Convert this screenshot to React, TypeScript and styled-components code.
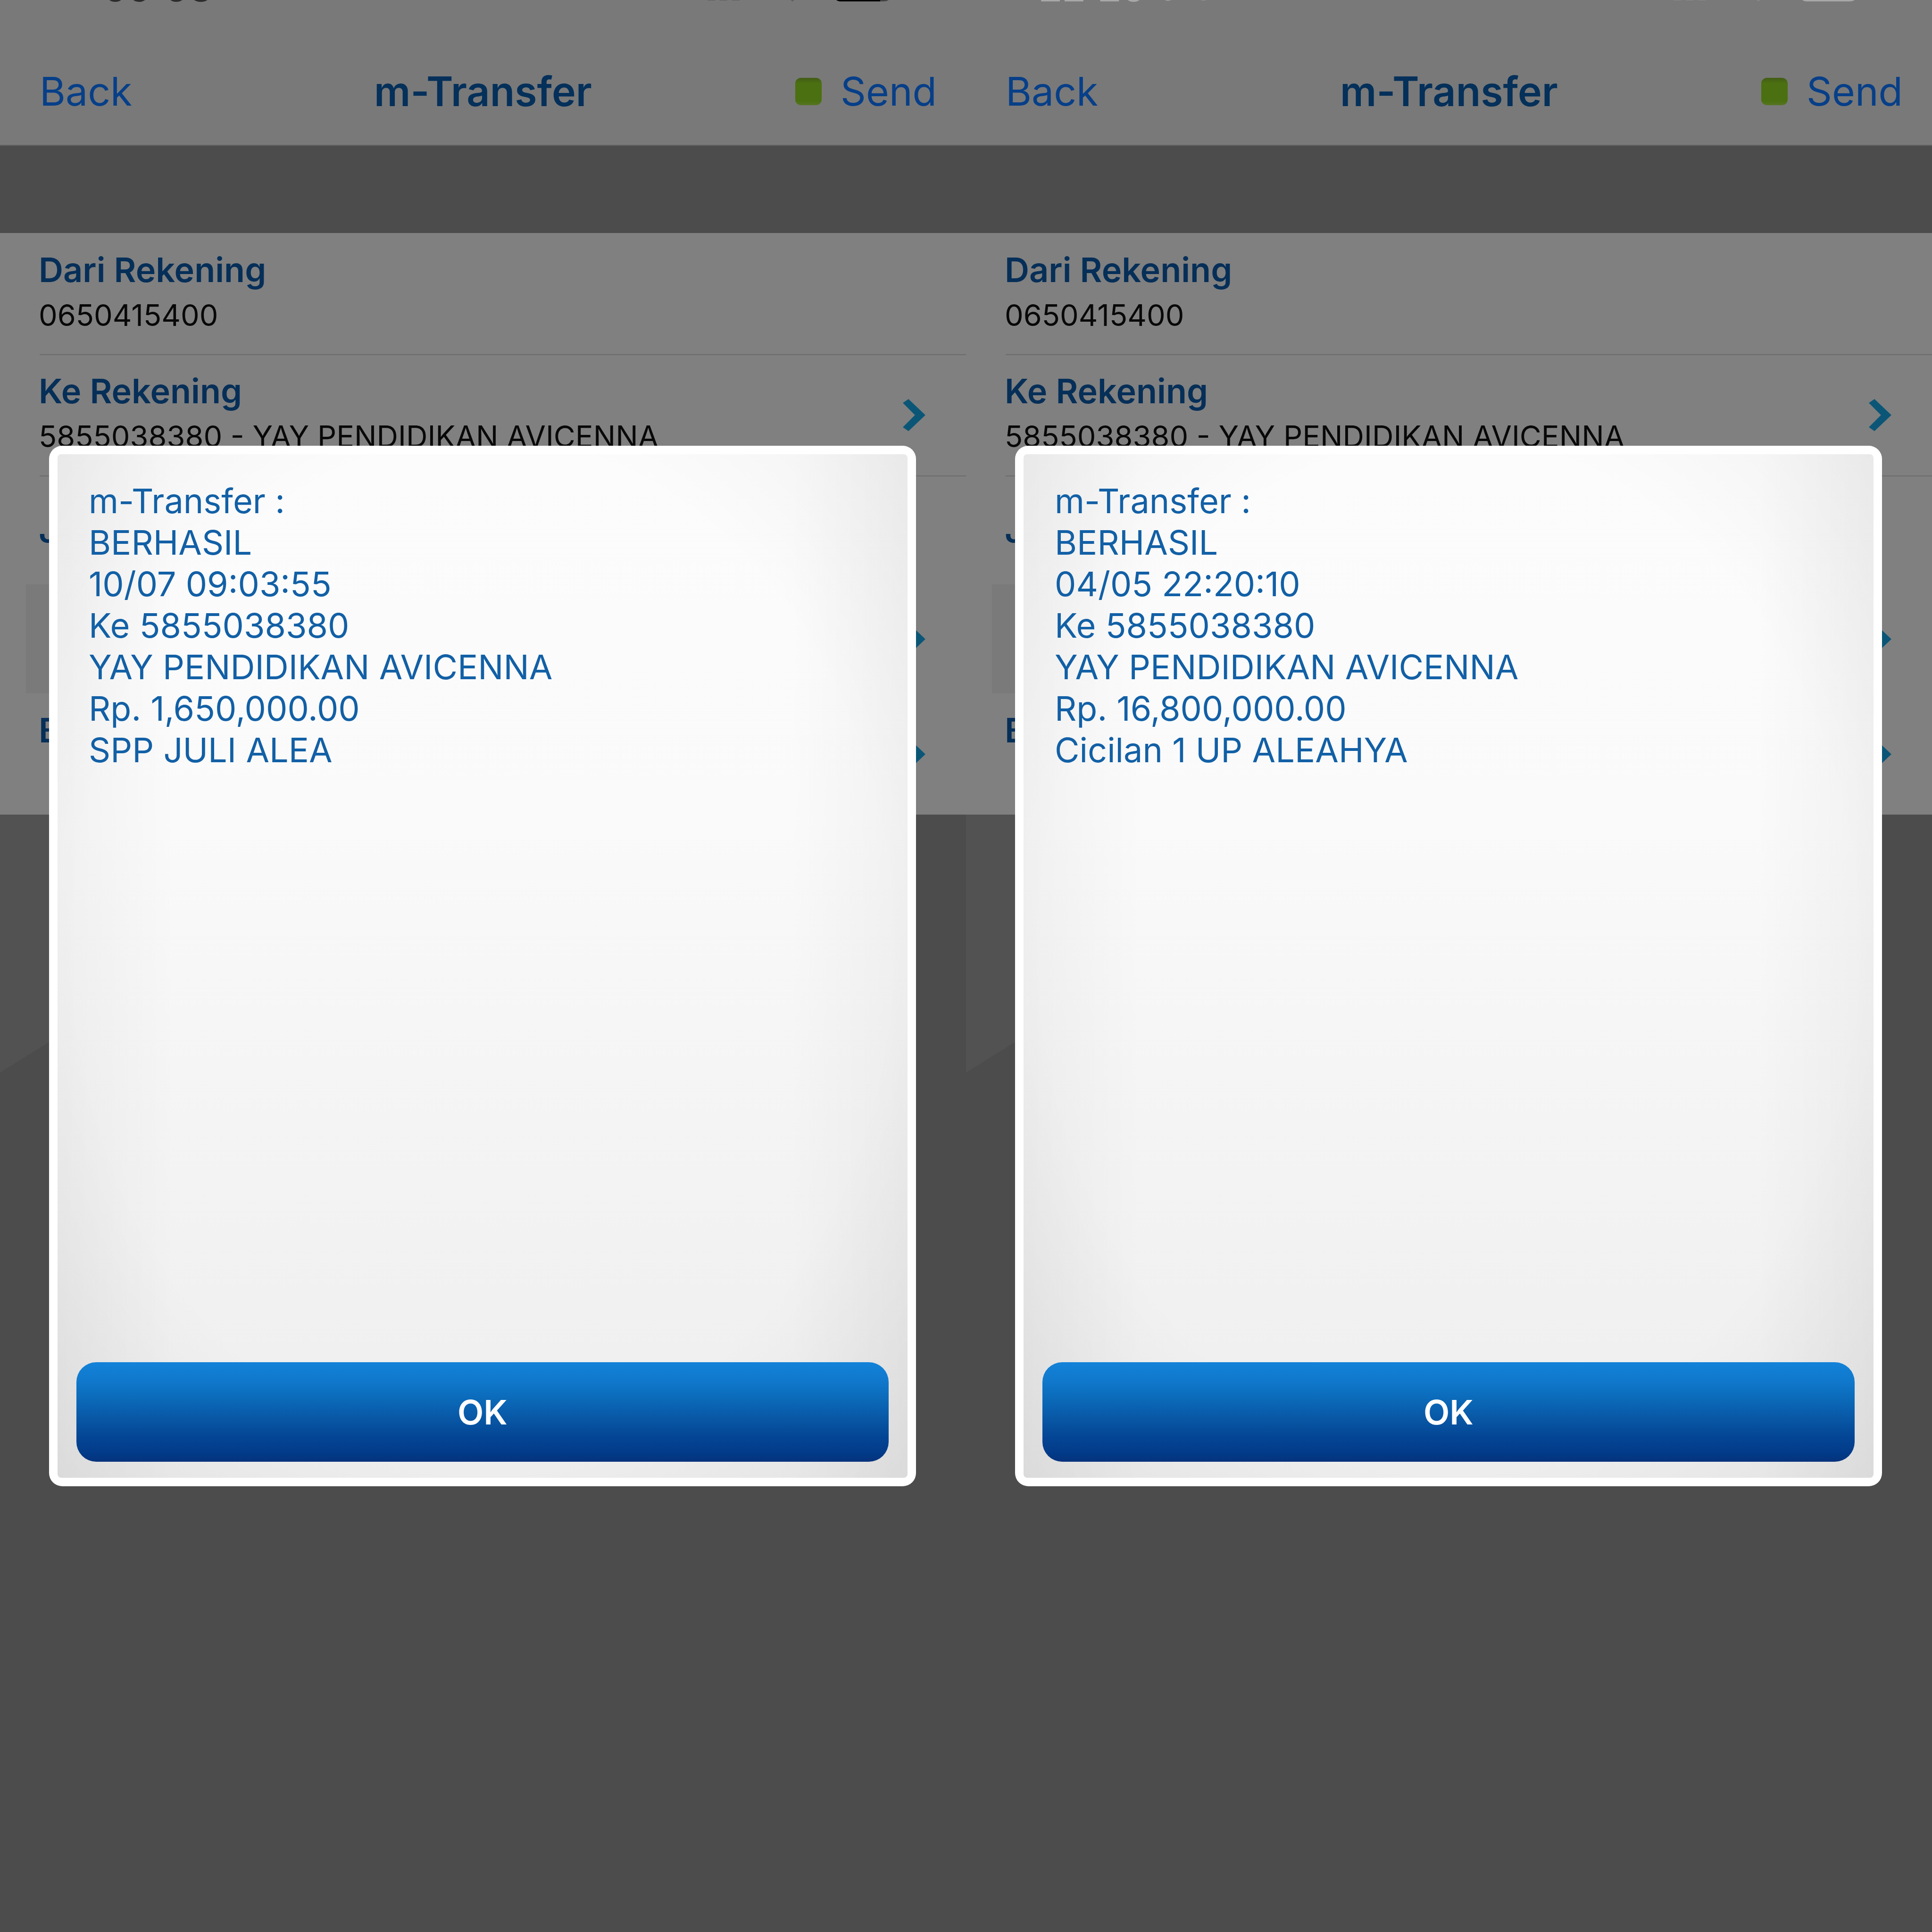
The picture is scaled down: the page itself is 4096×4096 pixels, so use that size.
import React from "react";
import styled, { createGlobalStyle, css } from "styled-components";

const GlobalStyle = createGlobalStyle`
  *, *::before, *::after { box-sizing: border-box; }
  body {
    margin: 0;
    background: #4c4c4c;
    font-family: Inter, "Liberation Sans", sans-serif;
  }
  button { font: inherit; color: inherit; border: 0; background: none; padding: 0; cursor: pointer; }
`;

const Screens = styled.main`
  display: grid;
  grid-template-columns: 1fr 1fr;
  min-height: 100vh;
`;

const Phone = styled.section`
  position: relative;
  display: flex;
  flex-direction: column;
  overflow: hidden;
  background: #4c4c4c;
`;

/* Only the last few pixels of the status bar stay on screen. */
const StatusBar = styled.div<{ $tone: string }>`
  display: flex;
  align-items: flex-end;
  justify-content: space-between;
  height: 4px;
  overflow: hidden;
  background: #797979;
  color: ${(p) => p.$tone};
`;

const ClockGroup = styled.div<{ $start: number }>`
  display: flex;
  align-items: flex-end;
  gap: 28px;
  margin-left: ${(p) => p.$start}px;
`;

const Clock = styled.span`
  margin-bottom: -10px;
  font-size: 80px;
  line-height: 80px;
  font-weight: 600;
`;

const TrackingMark = styled.svg`
  flex: none;
  width: 100px;
  height: 4px;
`;

const StatusIcons = styled.svg`
  flex: none;
  width: 400px;
  height: 4px;
  margin-right: 156px;
`;

const NavBar = styled.header`
  display: grid;
  grid-template-columns: 1fr auto 1fr;
  align-items: center;
  height: 305px;
  padding: 138px 62px 61px;
  border-bottom: 2px solid #636363;
  background: #797979;
  font-size: 84px;
  line-height: 104px;
`;

const NavStart = styled.div`
  display: flex;
  padding-left: 22px;
`;

const NavButton = styled.button`
  color: #073f88;
`;

const NavTitle = styled.h1`
  margin: 0;
  font-size: 86px;
  line-height: 104px;
  font-weight: 600;
  color: #04305a;
`;

const NavEnd = styled.div`
  display: flex;
  align-items: center;
  justify-content: flex-end;
  gap: 40px;
`;

const StatusDot = styled.span`
  width: 56px;
  height: 58px;
  border-radius: 12px;
  background: linear-gradient(#425c17, #4b7011 20%, #4b7011 85%, #567524);
`;

const Form = styled.ul`
  margin: 185px 0 0;
  padding: 0;
  list-style: none;
  background: #808080;
`;

const Item = styled.li<{ $shaded?: boolean }>`
  position: relative;
  display: flex;

  ${(p) =>
    p.$shaded &&
    css`
      background: linear-gradient(90deg, #808080 55px, #7a7a7a 55px, #7a7a7a 50%, #808080 50%);
    `}

  & + &::before {
    content: "";
    position: absolute;
    top: 0;
    left: 84px;
    right: 0;
    height: 2px;
    background: #6c6c6c;
  }
`;

const Row = styled.div<{ $short?: boolean }>`
  flex: 1;
  display: flex;
  align-items: center;
  justify-content: space-between;
  min-height: ${(p) => (p.$short ? 231 : 257)}px;
  padding: 0 86px 0 82px;
  text-align: left;
`;

const Fields = styled.span<{ $center?: boolean }>`
  display: flex;
  flex-direction: column;
  align-self: ${(p) => (p.$center ? "center" : "flex-start")};
  padding-top: ${(p) => (p.$center ? 0 : 31)}px;
`;

const Label = styled.span`
  font-size: 72px;
  line-height: 94px;
  font-weight: 600;
  color: #062f58;
`;

const Value = styled.span`
  font-size: 63px;
  line-height: 98px;
  color: #080808;
`;

const ChevronSvg = styled.svg`
  flex: none;
  width: 48px;
  height: 68px;
  fill: #0b5676;
`;

const Glare = styled.div`
  width: 880px;
  height: 547px;
  background: #525252;
  clip-path: polygon(0 0, 100% 0, 0 100%);
`;

const Overlay = styled.div`
  position: absolute;
  inset: 0;
  display: flex;
  align-items: center;
  padding: 0 106px 0 104px;
`;

const Dialog = styled.div`
  flex: 1;
  display: flex;
  flex-direction: column;
  justify-content: space-between;
  min-height: 2206px;
  padding: 18px;
  border-radius: 28px;
  background: #ffffff;
`;

const DialogBody = styled.div`
  flex: 1;
  display: flex;
  flex-direction: column;
  justify-content: space-between;
  padding: 55px 40px 34px;
  border-radius: 8px;
  background:
    linear-gradient(90deg, rgba(0, 0, 0, 0.035), transparent 14%, transparent 86%, rgba(0, 0, 0, 0.035)),
    radial-gradient(ellipse 72% 74% at 50% 48%, transparent 66%, rgba(0, 0, 0, 0.05) 100%),
    linear-gradient(#fcfcfc 0%, #fafafa 35%, #f4f4f4 65%, #eeeeee 100%);
`;

const Message = styled.p`
  margin: 0;
  padding: 0 26px;
  font-size: 72px;
  line-height: 88px;
  color: #1260a6;
`;

const Line = styled.span`
  display: block;
`;

const OkButton = styled.button`
  height: 211px;
  border-radius: 42px;
  background: linear-gradient(#1282d8 0%, #1079cd 18%, #0b69b8 38%, #0856a4 58%, #034594 76%, #023a88 92%, #06327c 100%);
  color: #ffffff;
  font-size: 72px;
  line-height: 88px;
  font-weight: 600;
`;

const Chevron = () => (
  <ChevronSvg viewBox="0 0 52 74" aria-hidden="true">
    <path d="M0 9 L13 0 L52 37 L13 74 L0 65 L28 37 Z" />
  </ChevronSvg>
);

interface Transfer {
  clock: string;
  clockStart: number;
  tone: string;
  charge: string;
  tracking: boolean;
  lines: string[];
}

const transfers: Transfer[] = [
  {
    clock: "09:03",
    clockStart: 218,
    tone: "#2c2c2c",
    charge: "#000000",
    tracking: false,
    lines: [
      "m-Transfer :",
      "BERHASIL",
      "10/07 09:03:55",
      "Ke 5855038380",
      "YAY PENDIDIKAN AVICENNA",
      "Rp. 1,650,000.00",
      "SPP JULI ALEA",
    ],
  },
  {
    clock: "22:20",
    clockStart: 154,
    tone: "#a8a8a8",
    charge: "#a8a8a8",
    tracking: true,
    lines: [
      "m-Transfer :",
      "BERHASIL",
      "04/05 22:20:10",
      "Ke 5855038380",
      "YAY PENDIDIKAN AVICENNA",
      "Rp. 16,800,000.00",
      "Cicilan 1 UP ALEAHYA",
    ],
  },
];

const Screen = ({ transfer }: { transfer: Transfer }) => (
  <Phone>
    <StatusBar $tone={transfer.tone}>
      <ClockGroup $start={transfer.clockStart}>
        <Clock>{transfer.clock}</Clock>
        {transfer.tracking && (
          <TrackingMark viewBox="0 0 100 4" fill="#989898" aria-hidden="true">
            <path d="M12 0 H26 L20 2 H15 Z" />
            <path d="M88 0 H99 L97 1 H90 Z" />
          </TrackingMark>
        )}
      </ClockGroup>
      <StatusIcons viewBox="0 0 400 4" aria-hidden="true">
        <g fill={transfer.tone} opacity="0.35">
          <rect x="8" y="0" width="16" height="1" />
          <rect x="34" y="0" width="16" height="1" />
          <rect x="60" y="0" width="16" height="1" />
          <path d="M184 0 H192 L188 3 Z" />
        </g>
        <path d="M281 0 H392 Q388 3 380 3 H292 Q284 3 281 0 Z" fill={transfer.charge} opacity="0.45" />
        <path
          d={transfer.tracking ? "M281 0 H392 Q388 3 380 3 H292 Q284 3 281 0 Z" : "M281 0 H374 V3 H292 Q284 3 281 0 Z"}
          fill={transfer.charge}
        />
      </StatusIcons>
    </StatusBar>
    <NavBar>
      <NavStart>
        <NavButton type="button">Back</NavButton>
      </NavStart>
      <NavTitle>m-Transfer</NavTitle>
      <NavEnd>
        <StatusDot />
        <NavButton type="button">Send</NavButton>
      </NavEnd>
    </NavBar>
    <Form>
      <Item>
        <Row>
          <Fields>
            <Label>Dari Rekening</Label>
            <Value>0650415400</Value>
          </Fields>
        </Row>
      </Item>
      <Item>
        <Row as="button" type="button">
          <Fields>
            <Label>Ke Rekening</Label>
            <Value>5855038380 - YAY PENDIDIKAN AVICENNA</Value>
          </Fields>
          <Chevron />
        </Row>
      </Item>
      <Item>
        <Row $short>
          <Fields $center>
            <Label>J</Label>
          </Fields>
        </Row>
      </Item>
      <Item $shaded>
        <Row $short>
          <span />
          <Chevron />
        </Row>
      </Item>
      <Item>
        <Row as="button" type="button">
          <Fields>
            <Label>B</Label>
          </Fields>
          <Chevron />
        </Row>
      </Item>
    </Form>
    <Glare />
    <Overlay>
      <Dialog role="dialog" aria-label="m-Transfer">
        <DialogBody>
          <Message>
            {transfer.lines.map((line) => (
              <Line key={line}>{line}</Line>
            ))}
          </Message>
          <OkButton type="button">OK</OkButton>
        </DialogBody>
      </Dialog>
    </Overlay>
  </Phone>
);

export default function App() {
  return (
    <>
      <GlobalStyle />
      <Screens>
        {transfers.map((transfer) => (
          <Screen key={transfer.clock} transfer={transfer} />
        ))}
      </Screens>
    </>
  );
}
